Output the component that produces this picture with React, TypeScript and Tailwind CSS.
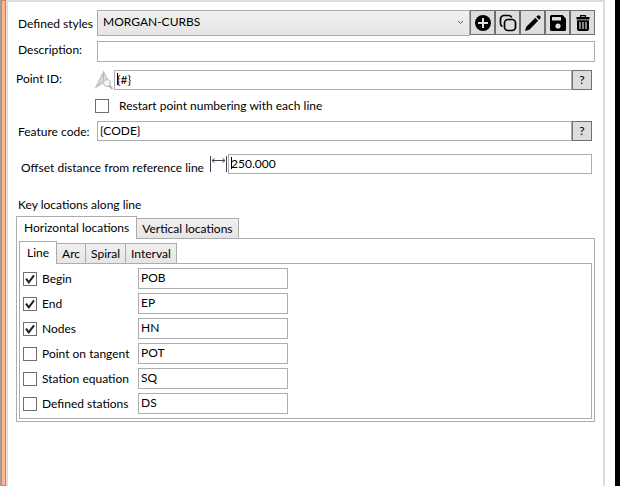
import React, { useReducer } from 'react';

type RowKey = 'begin' | 'end' | 'nodes' | 'tangent' | 'equation' | 'defined';

interface LocationRow {
  key: RowKey;
  label: string;
  code: string;
}

interface State {
  restart: boolean;
  mainTab: string;
  lineTab: string;
  checked: Record<RowKey, boolean>;
}

type Action =
  | { type: 'toggleRestart' }
  | { type: 'setMainTab'; value: string }
  | { type: 'setLineTab'; value: string }
  | { type: 'toggleRow'; key: RowKey };

const rows: LocationRow[] = [
  { key: 'begin', label: 'Begin', code: 'POB' },
  { key: 'end', label: 'End', code: 'EP' },
  { key: 'nodes', label: 'Nodes', code: 'HN' },
  { key: 'tangent', label: 'Point on tangent', code: 'POT' },
  { key: 'equation', label: 'Station equation', code: 'SQ' },
  { key: 'defined', label: 'Defined stations', code: 'DS' },
];

const mainTabs = ['Horizontal locations', 'Vertical locations'];
const lineTabs = ['Line', 'Arc', 'Spiral', 'Interval'];

const initialState: State = {
  restart: false,
  mainTab: 'Horizontal locations',
  lineTab: 'Line',
  checked: { begin: true, end: true, nodes: true, tangent: false, equation: false, defined: false },
};

function reducer(state: State, action: Action): State {
  switch (action.type) {
    case 'toggleRestart':
      return { ...state, restart: !state.restart };
    case 'setMainTab':
      return { ...state, mainTab: action.value };
    case 'setLineTab':
      return { ...state, lineTab: action.value };
    case 'toggleRow':
      return { ...state, checked: { ...state.checked, [action.key]: !state.checked[action.key] } };
    default:
      throw new Error('Unknown action');
  }
}

const field = 'min-w-0 border border-[#abadb3] bg-white px-[2px] pb-[2px] outline-none';

function CheckBox({ id, checked, onChange }: { id: string; checked: boolean; onChange: () => void }) {
  return (
    <span className="relative block size-[14px] shrink-0">
      <input
        id={id}
        type="checkbox"
        checked={checked}
        onChange={onChange}
        className="block size-[14px] appearance-none border border-[#707070] bg-white"
      />
      {checked && (
        <svg viewBox="0 0 14 14" className="pointer-events-none absolute inset-0 size-[14px]">
          <path d="M3 6.6 L5.8 10.4 L11 3.4" fill="none" stroke="#212121" strokeWidth="2" />
        </svg>
      )}
    </span>
  );
}

function ToolButton({ label, children }: { label: string; children: React.ReactNode }) {
  return (
    <button
      type="button"
      aria-label={label}
      className="flex size-[25px] items-center justify-center border border-[#707070] bg-[#dddddd]"
    >
      <svg viewBox="0 0 18 18" className="size-[18px]">
        {children}
      </svg>
    </button>
  );
}

function HelpButton({ label }: { label: string }) {
  return (
    <button
      type="button"
      aria-label={label}
      className="h-5 w-5 shrink-0 border border-[#707070] bg-[#dddddd] text-center leading-4"
    >
      ?
    </button>
  );
}

interface TabsProps {
  names: string[];
  active: string;
  onSelect: (name: string) => void;
  activePadding: string;
}

function Tabs({ names, active, onSelect, activePadding }: TabsProps) {
  return (
    <div role="tablist" className="flex h-[22px] items-end">
      {names.map((name) => (
        <button
          key={name}
          type="button"
          role="tab"
          aria-selected={name === active}
          onClick={() => onSelect(name)}
          className={
            name === active
              ? `relative z-10 -mb-px h-[23px] border border-b-0 border-[#acacac] bg-white pb-px ${activePadding}`
              : 'h-5 border border-b-0 border-l-0 border-[#acacac] bg-linear-to-b from-[#f0f0f0] to-[#e5e5e5] px-[5px]'
          }
        >
          {name}
        </button>
      ))}
    </div>
  );
}

export default function App() {
  const [state, dispatch] = useReducer(reducer, initialState);

  return (
    <div className="flex min-h-screen bg-white font-['Lato','Open_Sans',sans-serif] text-[12px] leading-4 text-black">
      {/* left splitter */}
      <div className="w-px bg-[#a0a0a0]" />
      <div className="w-[5px] border border-[#f4792f] bg-[#ffb48a]" />

      <main className="min-w-0 grow border-x-2 border-t-2 border-[#dddddd] pl-2 pr-2">
        <div className="mt-2 flex h-[26px] pl-[2px]">
          <label htmlFor="styles" className="w-[79px] shrink-0 whitespace-nowrap pt-[6px]">Defined styles</label>
          <div className="relative min-w-0 grow">
            <select
              id="styles"
              className="h-[26px] w-full appearance-none border border-[#acacac] bg-linear-to-b from-[#f0f0f0] to-[#e5e5e5] pb-[2px] pl-[5px] outline-none"
            >
              <option>MORGAN-CURBS</option>
            </select>
            <svg viewBox="0 0 7 5" className="pointer-events-none absolute right-[6px] top-[10px] h-[5px] w-[7px]">
              <path d="M1 1 L3.5 3.5 L6 1" fill="none" stroke="#606060" />
            </svg>
          </div>
          <ToolButton label="Add">
            <circle cx="9" cy="9" r="8" />
            <path d="M9 4 V14 M4 9 H14" stroke="#dddddd" strokeWidth="2" />
          </ToolButton>
          <ToolButton label="Copy">
            <rect x="5.5" y="5.5" width="11" height="11" rx="3.5" fill="none" stroke="#000" strokeWidth="1.7" />
            <path d="M3.5 12.5 A3 3 0 0 1 1.5 10 V5 A3.5 3.5 0 0 1 5 1.5 H10 A3 3 0 0 1 12.7 3.5" fill="none" stroke="#000" strokeWidth="1.7" />
          </ToolButton>
          <ToolButton label="Edit">
            <path d="M1 17 L2.3 12.7 L11.3 3.8 L14.2 6.7 L5.3 15.7 Z" />
            <path d="M12.3 2.8 L13.4 1.7 Q14.7 0.7 16 2 Q17.3 3.3 16.3 4.6 L15.2 5.7 Z" />
          </ToolButton>
          <ToolButton label="Save">
            <path d="M2.5 1 H13.5 L17 4.5 V15.5 Q17 17 15.5 17 H2.5 Q1 17 1 15.5 V2.5 Q1 1 2.5 1 Z" />
            <rect x="3" y="3" width="9" height="3.5" fill="#dddddd" />
            <circle cx="9" cy="12" r="2.6" fill="#dddddd" />
          </ToolButton>
          <ToolButton label="Delete">
            <path d="M6 3 V1 H12 V3 H15.5 V5.5 H2.5 V3 Z M7.2 2.2 V3 H10.8 V2.2 Z" fillRule="evenodd" />
            <path d="M3 6.3 H15 V15 Q15 17 13 17 H5 Q3 17 3 15 Z" />
            <path d="M6 8 V15 M9 8 V15 M12 8 V15" stroke="#dddddd" strokeWidth="1.2" />
          </ToolButton>
        </div>

        <div className="mt-[5px] flex pl-[2px]">
          <label htmlFor="description" className="w-[79px] shrink-0 pt-px">Description:</label>
          <input id="description" className={`h-[21px] grow ${field}`} />
        </div>

        <div className="mt-2 flex pr-[3px]">
          <label htmlFor="point-id" className="w-[78px] shrink-0 pt-px">Point ID:</label>
          <svg viewBox="0 0 20 20" className="size-5 shrink-0">
            <path d="M2 17 L9.5 2 L17 17 L9.5 12.5 Z" fill="#e0e0de" stroke="#c8c8c6" strokeWidth="1.5" />
            <path d="M9.5 3 V11 M2.5 17 L8 11" fill="none" stroke="#b5b5b3" />
            <circle cx="13" cy="13" r="3.5" fill="#f6f6f4" stroke="#bdbdbb" />
            <path d="M15 15.5 L18.5 19" stroke="#b9b9b7" strokeWidth="2" />
          </svg>
          <div className="relative flex min-w-0 grow">
            <input id="point-id" defaultValue="{#}" className={`h-5 grow ${field}`} />
            <span className="absolute left-[3px] top-[3px] h-3 w-px bg-black" />
          </div>
          <HelpButton label="Point ID help" />
        </div>

        <div className="mt-2 flex items-center gap-[10px] pl-[79px]">
          <CheckBox id="restart" checked={state.restart} onChange={() => dispatch({ type: 'toggleRestart' })} />
          <label htmlFor="restart">Restart point numbering with each line</label>
        </div>

        <div className="mt-[7px] flex pl-[2px] pr-[3px]">
          <label htmlFor="feature" className="w-[79px] shrink-0 whitespace-nowrap pt-[3px]">Feature code:</label>
          <input id="feature" defaultValue="{CODE}" className={`h-5 grow ${field}`} />
          <HelpButton label="Feature code help" />
        </div>

        <div className="mt-[13px] flex pl-[5px] pr-[3px]">
          <label htmlFor="offset" className="w-[188px] shrink-0 whitespace-nowrap pt-[6px]">
            Offset distance from reference line
          </label>
          <svg viewBox="0 0 19 20" className="h-5 w-[19px] shrink-0" fill="none" stroke="#46424f">
            <path d="M1.5 2 V18 M17.5 2 V18" />
            <path d="M3 6.5 H16 M5.5 4.5 L3 6.5 L5.5 8.5 M13.5 4.5 L16 6.5 L13.5 8.5" />
          </svg>
          <div className="relative flex min-w-0 grow">
            <input id="offset" defaultValue="250.000" className={`h-5 grow ${field}`} />
            <span className="absolute left-[3px] top-[3px] h-3 w-px bg-black" />
          </div>
        </div>

        <h2 className="mt-[21px] pl-[2px]">Key locations along line</h2>

        <section className="mt-[3px]">
          <Tabs
            names={mainTabs}
            active={state.mainTab}
            onSelect={(value) => dispatch({ type: 'setMainTab', value })}
            activePadding="px-[7px]"
          />
          <div className="border border-[#acacac] p-[2px]">
            <Tabs
              names={lineTabs}
              active={state.lineTab}
              onSelect={(value) => dispatch({ type: 'setLineTab', value })}
              activePadding="px-[7px]"
            />
            <div className="flex flex-col gap-1 border border-[#acacac] px-[3px] pb-1 pt-1">
              {rows.map((row) => (
                <div key={row.key} className="flex items-center">
                  <CheckBox
                    id={row.key}
                    checked={state.checked[row.key]}
                    onChange={() => dispatch({ type: 'toggleRow', key: row.key })}
                  />
                  <label htmlFor={row.key} className="w-[101px] shrink-0 whitespace-nowrap pl-[5px]">
                    {row.label}
                  </label>
                  <input aria-label={`${row.label} code`} defaultValue={row.code} className={`h-[21px] w-[150px] ${field}`} />
                </div>
              ))}
            </div>
          </div>
        </section>
      </main>

      <div className="w-[10px] bg-white" />
      <div className="w-[5px] bg-black" />
    </div>
  );
}
